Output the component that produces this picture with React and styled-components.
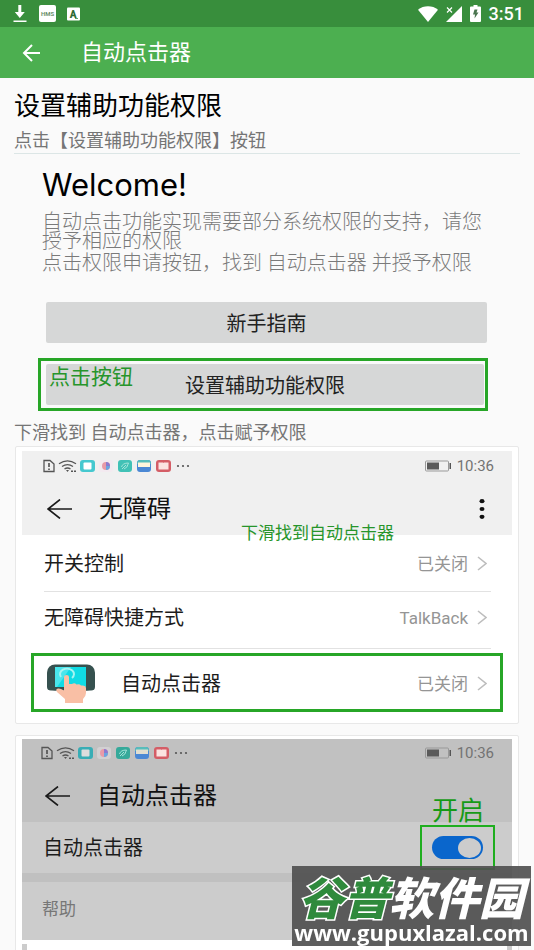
import React from 'react';
import styled, { createGlobalStyle } from 'styled-components';

const GlobalStyle = createGlobalStyle`
  * { box-sizing: border-box; }
  body {
    margin: 0;
    background: #fafafa;
    color: #111;
    font-family: Roboto, "Noto Sans CJK SC", sans-serif;
  }
  h1, h2, h3, p { margin: 0; font-weight: 400; }
  button { font-family: inherit; cursor: pointer; }
  svg { display: block; flex: none; }
`;

const Screen = styled.div`
  display: flex;
  flex-direction: column;
  height: 100vh;
  overflow: hidden;
`;

const SystemBar = styled.div`
  display: flex;
  align-items: center;
  justify-content: space-between;
  flex: none;
  height: 27px;
  padding: 0 10px 0 12px;
  background: #388e3c;
  color: #fff;
`;

const SystemIcons = styled.div`
  display: flex;
  align-items: center;
  gap: ${(p) => p.$gap}px;
`;

const Clock = styled.span`
  font-size: 18px;
  line-height: 24px;
  font-weight: 500;
`;

const AppBar = styled.header`
  display: flex;
  align-items: center;
  flex: none;
  gap: 40px;
  height: 51px;
  padding: 1px 20px 0;
  background: #4caf50;
  color: #fff;
`;

const AppTitle = styled.h1`
  font-size: 22px;
  line-height: 32px;
`;

const IconButton = styled.button`
  display: flex;
  padding: 0;
  border: 0;
  background: none;
  color: inherit;
`;

const Content = styled.main`
  flex: 1;
  min-height: 0;
  overflow-y: auto;
  scrollbar-width: none;
  padding: 9px 14px 0;
`;

const Heading = styled.h2`
  color: #000;
  font-size: 26px;
  line-height: 38px;
`;

const StepText = styled.p`
  color: #757575;
  font-size: 18px;
  line-height: 24px;
  margin-top: ${(p) => p.$top}px;
`;

const WelcomePanel = styled.section`
  padding: 11px 32px 0 28px;
  border-top: 1px solid #dce6e6;
`;

const WelcomeTitle = styled.h3`
  color: #000;
  font-family: Inter, sans-serif;
  font-size: 31px;
  line-height: 40px;
  margin-bottom: 8px;
`;

const Paragraph = styled.p`
  color: #7a7a7a;
  font-size: 20px;
  font-weight: 300;
  line-height: 19px;
  margin-bottom: 3px;
`;

const GrayButton = styled.button`
  display: block;
  width: 100%;
  height: 41px;
  padding: 0;
  border: 0;
  border-radius: 2px;
  background: #d6d7d7;
  color: #222;
  font-size: 20px;
  font-weight: 400;
`;

const ButtonSlot = styled.div`
  margin: 29px 1px 0 4px;
`;

const ButtonFrame = styled.div`
  position: relative;
  margin: 15px 0 0 -4px;
  padding: 3px 1px 3px 5px;
  border: 3px solid #27a627;
`;

const ButtonNote = styled.span`
  position: absolute;
  top: 4px;
  left: 8px;
  color: #27952b;
  font-size: 21px;
  line-height: 24px;
  pointer-events: none;
`;

const PhoneCard = styled.section`
  position: relative;
  margin: ${(p) => p.$top}px 1px 0;
  padding: ${(p) => (p.$dim ? 3 : 4)}px 6px 11px;
  border: 1px solid #e8e8e8;
  border-radius: 2px;
  background: #fff;
`;

const PhoneHeader = styled.div`
  padding: ${(p) => (p.$dim ? 6 : 7)}px 18px 10px ${(p) => (p.$dim ? 19 : 21)}px;
  background: ${(p) => (p.$dim ? '#c1c1c1' : '#f0f0f0')};
`;

const PhoneStatus = styled.div`
  display: flex;
  align-items: center;
  gap: 5px;
  height: 16px;
  margin-bottom: 19px;
`;

const PhoneTime = styled.span`
  color: #737373;
  font-size: 15px;
  line-height: 16px;
`;

const Spacer = styled.span`
  flex: 1;
`;

const PhoneTitleRow = styled.div`
  display: flex;
  align-items: center;
  gap: 26px;
  height: 32px;
  padding: 0 9px 0 4px;
`;

const PhoneTitle = styled.h3`
  flex: 1;
  color: #111;
  font-size: 24px;
  font-weight: 400;
  line-height: 32px;
`;

const ListRow = styled.div`
  display: flex;
  align-items: center;
  gap: 9px;
  height: ${(p) => p.$height}px;
  padding: 1px 25px 0 22px;
  font-size: 20px;
`;

const RowLabel = styled.span`
  flex: 1;
  color: #1c1c1c;
  line-height: 28px;
`;

const RowState = styled.span`
  color: #959595;
  font-size: 17px;
  line-height: 24px;
`;

const Divider = styled.hr`
  height: 1px;
  margin: ${(p) => p.$top}px 21px 0 ${(p) => p.$inset}px;
  border: 0;
  background: #e2e2e2;
`;

const TargetRow = styled.div`
  display: flex;
  align-items: center;
  gap: 9px;
  height: 59px;
  margin: 4px 9px 0;
  padding: 2px 13px 0 13px;
  border: 3px solid #27a627;
  font-size: 20px;

  ${RowLabel} { margin-left: 17px; }
`;

const FindNote = styled.span`
  position: absolute;
  top: 74px;
  right: 124px;
  color: #27952b;
  font-size: 17px;
  line-height: 24px;
`;

const EnableNote = styled.span`
  position: absolute;
  top: 57px;
  right: 34px;
  color: #169a16;
  font-size: 26px;
  line-height: 36px;
`;

const SwitchRow = styled.label`
  display: flex;
  align-items: center;
  height: 51px;
  padding: 0 17px 0 21px;
  background: #ccc;
  font-size: 20px;
`;

const SwitchFrame = styled.span`
  display: flex;
  align-items: center;
  justify-content: center;
  width: 75px;
  height: 45px;
  border: 2px solid #1fae1f;
`;

const Switch = styled.input`
  appearance: none;
  display: flex;
  align-items: center;
  width: 51px;
  height: 23px;
  margin: 0;
  padding: 0 2px;
  border-radius: 12px;
  background: #8c8c8c;

  &::before {
    content: "";
    width: 23px;
    height: 20px;
    border-radius: 50%;
    background: #ccc;
  }

  &:checked {
    justify-content: flex-end;
    background: #0a66cc;
  }
`;

const HelpRow = styled.div`
  padding: 15px 20px 19px;
  border-top: 9px solid #c0c0c0;
  background: #ccc;
  color: #777;
  font-size: 17px;
  line-height: 24px;
`;

const DialogShade = styled.div`
  height: 60px;
  margin-top: 4px;
  padding: 0 5px;
  background: #ccc;

  &::before {
    content: "";
    display: block;
    height: 60px;
    background: #fff;
  }
`;

const Watermark = styled.aside`
  position: fixed;
  right: 3px;
  bottom: 4px;
  width: 239px;
  height: 80px;
  padding-top: 7px;
  background: rgba(80, 80, 80, 0.92);
  color: #fff;
  text-align: center;
  white-space: nowrap;
`;

const BrandName = styled.div`
  font-family: "Noto Sans CJK SC", sans-serif;
  font-size: 45px;
  font-style: italic;
  font-weight: 900;
  line-height: 46px;
`;

const BrandGreen = styled.span`
  color: #2f8a3c;
  -webkit-text-stroke: 3px #fff;
  paint-order: stroke fill;
`;

const BrandUrl = styled.div`
  display: flex;
  justify-content: center;
  font-family: "Open Sans", sans-serif;
  font-size: 22px;
  font-weight: 700;
  line-height: 26px;
`;

function DownloadIcon() {
  return (
    <svg width="16" height="18" viewBox="0 0 16 18" fill="#fff">
      <path d="M6.3 0h3v7h3.5L7.8 13 2.8 7h3.5zM1.5 15.5h13V17h-13z" />
    </svg>
  );
}

function HmsIcon() {
  return (
    <svg width="17" height="17" viewBox="0 0 17 17">
      <rect width="17" height="17" rx="2" fill="#fff" />
      <text x="8.5" y="10.5" textAnchor="middle" fontFamily="Roboto" fontWeight="700" fontSize="6" fill="#6b8f6d">HMS</text>
    </svg>
  );
}

function LetterIcon() {
  return (
    <svg width="13" height="14" viewBox="0 0 13 14">
      <rect width="13" height="13" y="0.5" rx="1" fill="#fff" />
      <text x="6.2" y="10.5" textAnchor="middle" fontFamily="Roboto" fontWeight="900" fontSize="10" fill="#2f6b33">A</text>
      <path d="M8 11.5h3" stroke="#388e3c" strokeWidth="0.8" />
    </svg>
  );
}

function WifiFull() {
  return (
    <svg width="20" height="16" viewBox="0 0 20 16" fill="#fff">
      <path d="M0 3.8C5.500-.8 14.500-.8 20 3.800L10 16z" />
    </svg>
  );
}

function NoSignal() {
  return (
    <svg width="16" height="16" viewBox="0 0 16 16">
      <path d="M16 0v16H0z" fill="#fff" />
      <path d="M0 0h7v7l-3 3H0z" fill="#388e3c" />
      <path d="M1 1.500l5 5M6 1.500l-5 5" stroke="#fff" strokeWidth="1.200" />
    </svg>
  );
}

function ChargingIcon() {
  return (
    <svg width="11" height="17" viewBox="0 0 11 17">
      <path d="M3.500 0h4v1.500H10q1 0 1 1V16q0 1-1 1H1q-1 0-1-1V2.500q0-1 1-1h2.500z" fill="#fff" />
      <path d="M4.500 4.500h3L6.500 7.500h2L4.500 13.500l.5-4H3z" fill="#4b7550" />
    </svg>
  );
}

function BackArrow() {
  return (
    <svg width="21" height="18" viewBox="0 0 21 18" fill="none" stroke="#fff" strokeWidth="2">
      <path d="M20 9H4M12 1L4 9l8 8" />
    </svg>
  );
}

function ThinArrow() {
  return (
    <svg width="26" height="20" viewBox="0 0 26 20" fill="none" stroke="#1a1a1a" strokeWidth="1.600">
      <path d="M25 10H1M13 0.500L1 10l12 9.500" />
    </svg>
  );
}

function MoreDots() {
  return (
    <svg width="6" height="20" viewBox="0 0 6 20" fill="#111">
      <ellipse cx="3" cy="2.200" rx="2.500" ry="2.100" />
      <ellipse cx="3" cy="10" rx="2.500" ry="2.100" />
      <ellipse cx="3" cy="17.800" rx="2.500" ry="2.100" />
    </svg>
  );
}

function Chevron() {
  return (
    <svg width="10" height="15" viewBox="0 0 10 15" fill="none" stroke="#bdbdbd" strokeWidth="1.600">
      <path d="M1 1l8 6.500L1 14" />
    </svg>
  );
}

function StatusGlyphs({ dim }) {
  return (
    <svg width="147" height="14" viewBox="0 0 147 14" fill="none">
      <path d="M1 1.500h6L11 5v7.500H1z" stroke="#555" strokeWidth="1.300" />
      <path d="M6 4v4M6 9.500v1.500" stroke="#444" strokeWidth="1.500" />
      <g stroke="#555" strokeWidth="1.300">
        <path d="M16 4.800q8.500-6 17 0M19 7.500q5.500-3.800 11 0M21.500 10q3-2 6 0" />
      </g>
      <path d="M23 11h3l-1.500 2zM28 11.500h2v1.500h-2zM31 11.500h2v1.500h-2z" fill="#555" />
      <rect x="37" y="1" width="15" height="12" rx="3" fill={dim ? '#38adb5' : '#45c8cf'} />
      <rect x="40.500" y="3.500" width="8" height="7" rx="1" fill={dim ? '#ddd' : '#fff'} />
      <rect x="56" y="1" width="14" height="12" rx="3" fill={dim ? '#d2d0d2' : '#f3eaf0'} />
      <circle cx="63" cy="7" r="4" fill="#e89aa8" />
      <path d="M63 3a4 4 0 0 1 4 4h-4z" fill="#8b7ad0" />
      <path d="M67 7a4 4 0 0 1-4 4V7z" fill="#6aa5e0" />
      <rect x="75" y="1" width="14" height="12" rx="3" fill={dim ? '#35a99a' : '#41c1b6'} />
      <path d="M78.500 8q1-4 7-4-1 5-4.500 6M79 10l4-4" stroke="#a5e5da" />
      <rect x="94" y="1" width="14" height="12" rx="3" fill="#4b88d4" />
      <path d="M94 5q0-4 3-4h8q3 0 3 4z" fill="#57bdbb" />
      <path d="M95 3.500h12v4.500H95z" fill={dim ? '#e0ded0' : '#fff6dc'} />
      <rect x="113" y="1" width="15" height="12" rx="3" fill="#d45d66" />
      <path d="M115.500 3.500h4.500l.5.600.5-.6h4.500v7h-10z" fill="#fbe3e1" />
      <circle cx="135" cy="7" r="1.100" fill="#555" />
      <circle cx="140" cy="7" r="1.100" fill="#555" />
      <circle cx="145" cy="7" r="1.100" fill="#555" />
    </svg>
  );
}

function BatteryIcon() {
  return (
    <svg width="27" height="12" viewBox="0 0 27 12">
      <rect x="0.500" y="1" width="23" height="10" rx="1" fill="none" stroke="#999" />
      <path d="M2 2.500h12v7H2z" fill="#5a5a5a" />
      <path d="M24.500 3H26v6h-1.500z" fill="#555" />
    </svg>
  );
}

function TapIcon() {
  return (
    <svg width="48" height="40" viewBox="0 0 48 40">
      <rect y="0.500" width="48" height="26" rx="8" fill="#36514f" />
      <path d="M0 14h48v9q0 3.500-4 3.500H4q-4 0-4-3.500z" fill="#36514f" />
      <path d="M8 3h31v20H8z" fill="#10dbe4" />
      <path d="M8 3h16L10 23H8z" fill="#4ae6ec" />
      <path d="M14 13a7 5.500 0 1 1 11 1" fill="none" stroke="#a5f4f2" strokeWidth="2" />
      <path d="M17 13q0-2 2.500-2t2.500 2v7h3q2.500-1.500 4.500.5 3-1 4.500 1 5-.5 5 2.500v5q0 3-3 6v4H18v-4l-8-7q-2-3 1-3.500 2-.5 6 2z" fill="#f9bfa5" />
    </svg>
  );
}

function PhoneTop({ title, dim, menu }) {
  return (
    <PhoneHeader $dim={dim}>
      <PhoneStatus>
        <StatusGlyphs dim={dim} />
        <Spacer />
        <BatteryIcon />
        <PhoneTime>10:36</PhoneTime>
      </PhoneStatus>
      <PhoneTitleRow>
        <IconButton aria-label="返回"><ThinArrow /></IconButton>
        <PhoneTitle>{title}</PhoneTitle>
        {menu && <IconButton aria-label="更多"><MoreDots /></IconButton>}
      </PhoneTitleRow>
    </PhoneHeader>
  );
}

export default function App() {
  return (
    <Screen>
      <GlobalStyle />
      <SystemBar>
        <SystemIcons $gap={11}>
          <DownloadIcon />
          <HmsIcon />
          <LetterIcon />
        </SystemIcons>
        <SystemIcons $gap={8}>
          <WifiFull />
          <NoSignal />
          <ChargingIcon />
          <Clock>3:51</Clock>
        </SystemIcons>
      </SystemBar>
      <AppBar>
        <IconButton aria-label="返回"><BackArrow /></IconButton>
        <AppTitle>自动点击器</AppTitle>
      </AppBar>

      <Content>
        <Heading>设置辅助功能权限</Heading>
        <StepText $top={4}>点击【设置辅助功能权限】按钮</StepText>

        <WelcomePanel>
          <WelcomeTitle>Welcome!</WelcomeTitle>
          <Paragraph>自动点击功能实现需要部分系统权限的支持，请您授予相应的权限</Paragraph>
          <Paragraph>点击权限申请按钮，找到 自动点击器 并授予权限</Paragraph>
          <ButtonSlot>
            <GrayButton>新手指南</GrayButton>
          </ButtonSlot>
          <ButtonFrame>
            <GrayButton>设置辅助功能权限</GrayButton>
            <ButtonNote>点击按钮</ButtonNote>
          </ButtonFrame>
        </WelcomePanel>

        <StepText $top={10}>下滑找到 自动点击器，点击赋予权限</StepText>

        <PhoneCard $top={1}>
          <PhoneTop title="无障碍" menu />
          <FindNote>下滑找到自动点击器</FindNote>
          <ListRow $height={56}>
            <RowLabel>开关控制</RowLabel>
            <RowState>已关闭</RowState>
            <Chevron />
          </ListRow>
          <Divider $top={0} $inset={22} />
          <ListRow $height={50}>
            <RowLabel>无障碍快捷方式</RowLabel>
            <RowState>TalkBack</RowState>
            <Chevron />
          </ListRow>
          <Divider $top={6} $inset={98} />
          <TargetRow>
            <TapIcon />
            <RowLabel>自动点击器</RowLabel>
            <RowState>已关闭</RowState>
            <Chevron />
          </TargetRow>
        </PhoneCard>

        <PhoneCard $top={11} $dim>
          <PhoneTop title="自动点击器" dim />
          <EnableNote>开启</EnableNote>
          <SwitchRow>
            <RowLabel>自动点击器</RowLabel>
            <SwitchFrame>
              <Switch type="checkbox" role="switch" defaultChecked />
            </SwitchFrame>
          </SwitchRow>
          <HelpRow>帮助</HelpRow>
          <DialogShade />
        </PhoneCard>
      </Content>

      <Watermark>
        <BrandName><BrandGreen>谷普</BrandGreen>软件园</BrandName>
        <BrandUrl>www.gupuxlazal.com</BrandUrl>
      </Watermark>
    </Screen>
  );
}
